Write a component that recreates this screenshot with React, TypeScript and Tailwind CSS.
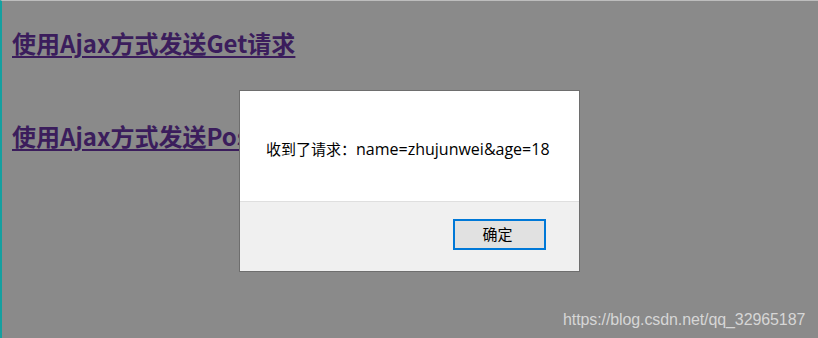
import React from "react";

export default function App() {
  return (
    <div
      className="relative w-[818px] h-[338px] overflow-hidden bg-[#8a8a8a] border-l-2 border-l-[#14a0a0] border-t border-t-[#bdbdbd]"
      style={{ fontFamily: '"Noto Sans CJK SC", "Noto Sans", sans-serif' }}
    >
      <div className="flex flex-col gap-[57px] pl-[10px] pt-[24px]">
        <a className="self-start text-[24px] leading-[36px] font-bold text-[#3b1d5c] underline decoration-2 underline-offset-[3px]">
          使用Ajax方式发送Get请求
        </a>
        <a className="self-start text-[24px] leading-[36px] font-bold text-[#3b1d5c] underline decoration-2 underline-offset-[3px]">
          使用Ajax方式发送Post请求
        </a>
      </div>

      <div className="absolute left-[237px] top-[89px] w-[341px] h-[182px] border border-[#6e6e6e] bg-white flex flex-col">
        <div className="h-[110px] flex items-center pl-[26px] pt-[6px] text-black whitespace-nowrap">
          <span className="text-[15px]">收到了请求：</span>
          <span
            className="text-[16px]"
            style={{ fontFamily: '"Open Sans", "Noto Sans", sans-serif' }}
          >
            name=zhujunwei&amp;age=18
          </span>
        </div>
        <div className="flex-1 bg-[#f0f0f0] border-t border-[#dfdfdf] flex justify-end items-start pt-[17px] pr-[33px]">
          <button className="w-[93px] h-[31px] border-2 border-[#0078d7] bg-[#e1e1e1] text-[15px] text-black flex items-center justify-center pr-[4px]">
            确定
          </button>
        </div>
      </div>

      <div
        className="absolute left-[561px] top-[307px] text-[16px] text-[#d6d6d6] tracking-[-0.1px]"
        style={{ fontFamily: '"Liberation Sans", Arial, sans-serif' }}
      >
        https://blog.csdn.net/qq_32965187
      </div>
    </div>
  );
}
